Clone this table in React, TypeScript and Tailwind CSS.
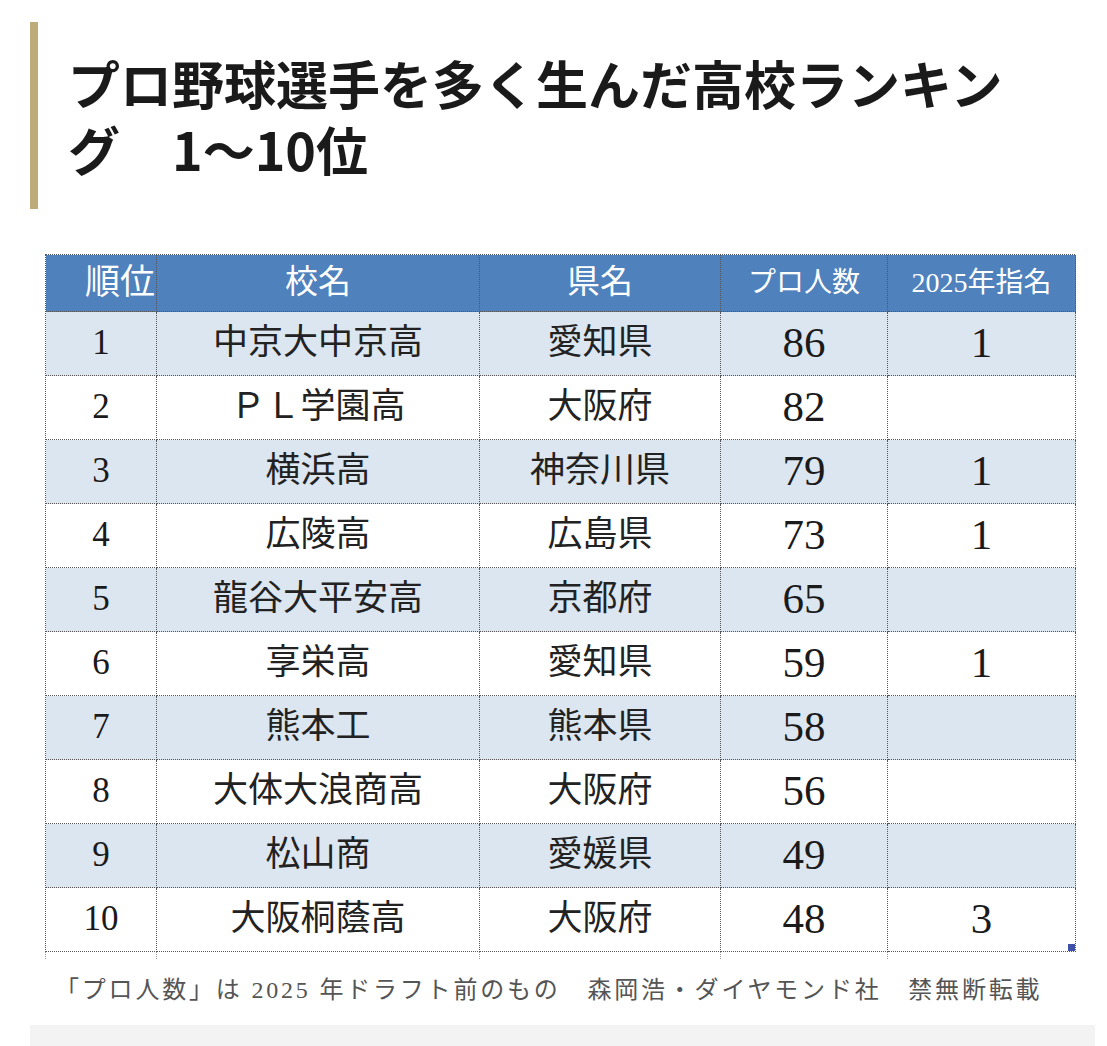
import React from "react";

const rows = [
  { rank: "1", school: "中京大中京高", pref: "愛知県", pros: "86", draft: "1" },
  { rank: "2", school: "ＰＬ学園高", pref: "大阪府", pros: "82", draft: "" },
  { rank: "3", school: "横浜高", pref: "神奈川県", pros: "79", draft: "1" },
  { rank: "4", school: "広陵高", pref: "広島県", pros: "73", draft: "1" },
  { rank: "5", school: "龍谷大平安高", pref: "京都府", pros: "65", draft: "" },
  { rank: "6", school: "享栄高", pref: "愛知県", pros: "59", draft: "1" },
  { rank: "7", school: "熊本工", pref: "熊本県", pros: "58", draft: "" },
  { rank: "8", school: "大体大浪商高", pref: "大阪府", pros: "56", draft: "" },
  { rank: "9", school: "松山商", pref: "愛媛県", pros: "49", draft: "" },
  { rank: "10", school: "大阪桐蔭高", pref: "大阪府", pros: "48", draft: "3" },
];

const serif = "font-['Liberation_Serif','Noto_Sans_CJK_JP',serif]";
const cell = "flex items-center justify-center border-r border-b border-dotted border-[#555]";

export default function App() {
  return (
    <div className="w-[1107px] min-h-[1046px] bg-white overflow-hidden">
      {/* heading with gold bar */}
      <div className="pt-[22px] pl-[30px]">
        <div className="border-l-[8px] border-[#bdac7a] pl-[30px] pt-[28px] pb-[27px]">
          <h1 className="w-[960px] text-[52px] leading-[66px] font-bold text-[#1a1a1a] font-['Noto_Sans_CJK_JP',sans-serif]">
            プロ野球選手を多く生んだ高校ランキング　1〜10位
          </h1>
        </div>
      </div>

      {/* ranking table */}
      <div className="mt-[45px] ml-[45px]">
        <div className={`grid grid-cols-[111px_323px_241px_167px_188px] w-[1030px] border-l border-t border-dotted border-[#555] ${serif}`}>
          <div className={`${cell} h-[57px] bg-[#4f81bd] text-white text-[35px] !justify-end pr-[1px]`}>順位</div>
          <div className={`${cell} h-[57px] bg-[#4f81bd] text-white text-[33px]`}>校名</div>
          <div className={`${cell} h-[57px] bg-[#4f81bd] text-white text-[33px]`}>県名</div>
          <div className={`${cell} h-[57px] bg-[#4f81bd] text-white text-[28px]`}>プロ人数</div>
          <div className={`${cell} h-[57px] bg-[#4f81bd] text-white text-[28px]`}>2025年指名</div>

          {rows.map((r, i) => {
            const bg = i % 2 === 0 ? "bg-[#dce6f1]" : "bg-white";
            return (
              <React.Fragment key={r.rank}>
                <div className={`${cell} ${bg} h-[64px] text-[35px] text-[#1a1a1a]`}>{r.rank}</div>
                <div className={`${cell} ${bg} h-[64px] text-[35px] text-[#222]`}>{r.school}</div>
                <div className={`${cell} ${bg} h-[64px] text-[35px] text-[#222]`}>{r.pref}</div>
                <div className={`${cell} ${bg} h-[64px] text-[43px] text-[#1a1a1a]`}>{r.pros}</div>
                <div className={`${cell} ${bg} h-[64px] text-[43px] text-[#1a1a1a] relative`}>
                  {r.draft}
                  {i === rows.length - 1 && (
                    <span className="absolute right-0 bottom-0 w-[7px] h-[7px] bg-[#3f51a8]" />
                  )}
                </div>
              </React.Fragment>
            );
          })}
        </div>
        {/* gridline stubs below the sheet */}
        <div className="grid grid-cols-[111px_323px_241px_167px_188px] w-[1030px] h-[7px] border-l border-dotted border-[#999]">
          <div className="border-r border-dotted border-[#999]" />
          <div className="border-r border-dotted border-[#999]" />
          <div className="border-r border-dotted border-[#999]" />
          <div className="border-r border-dotted border-[#999]" />
          <div />
        </div>
      </div>

      {/* caption */}
      <p className={`mt-[17px] ml-[55px] text-[24px] leading-[28px] tracking-[2.8px] text-[#555] ${serif}`}>
        「プロ人数」は 2025 年ドラフト前のもの　森岡浩・ダイヤモンド社　禁無断転載
      </p>

      <div className="mt-[21px] ml-[30px] w-[1065px] h-[40px] bg-[#f3f3f3]" />
    </div>
  );
}
